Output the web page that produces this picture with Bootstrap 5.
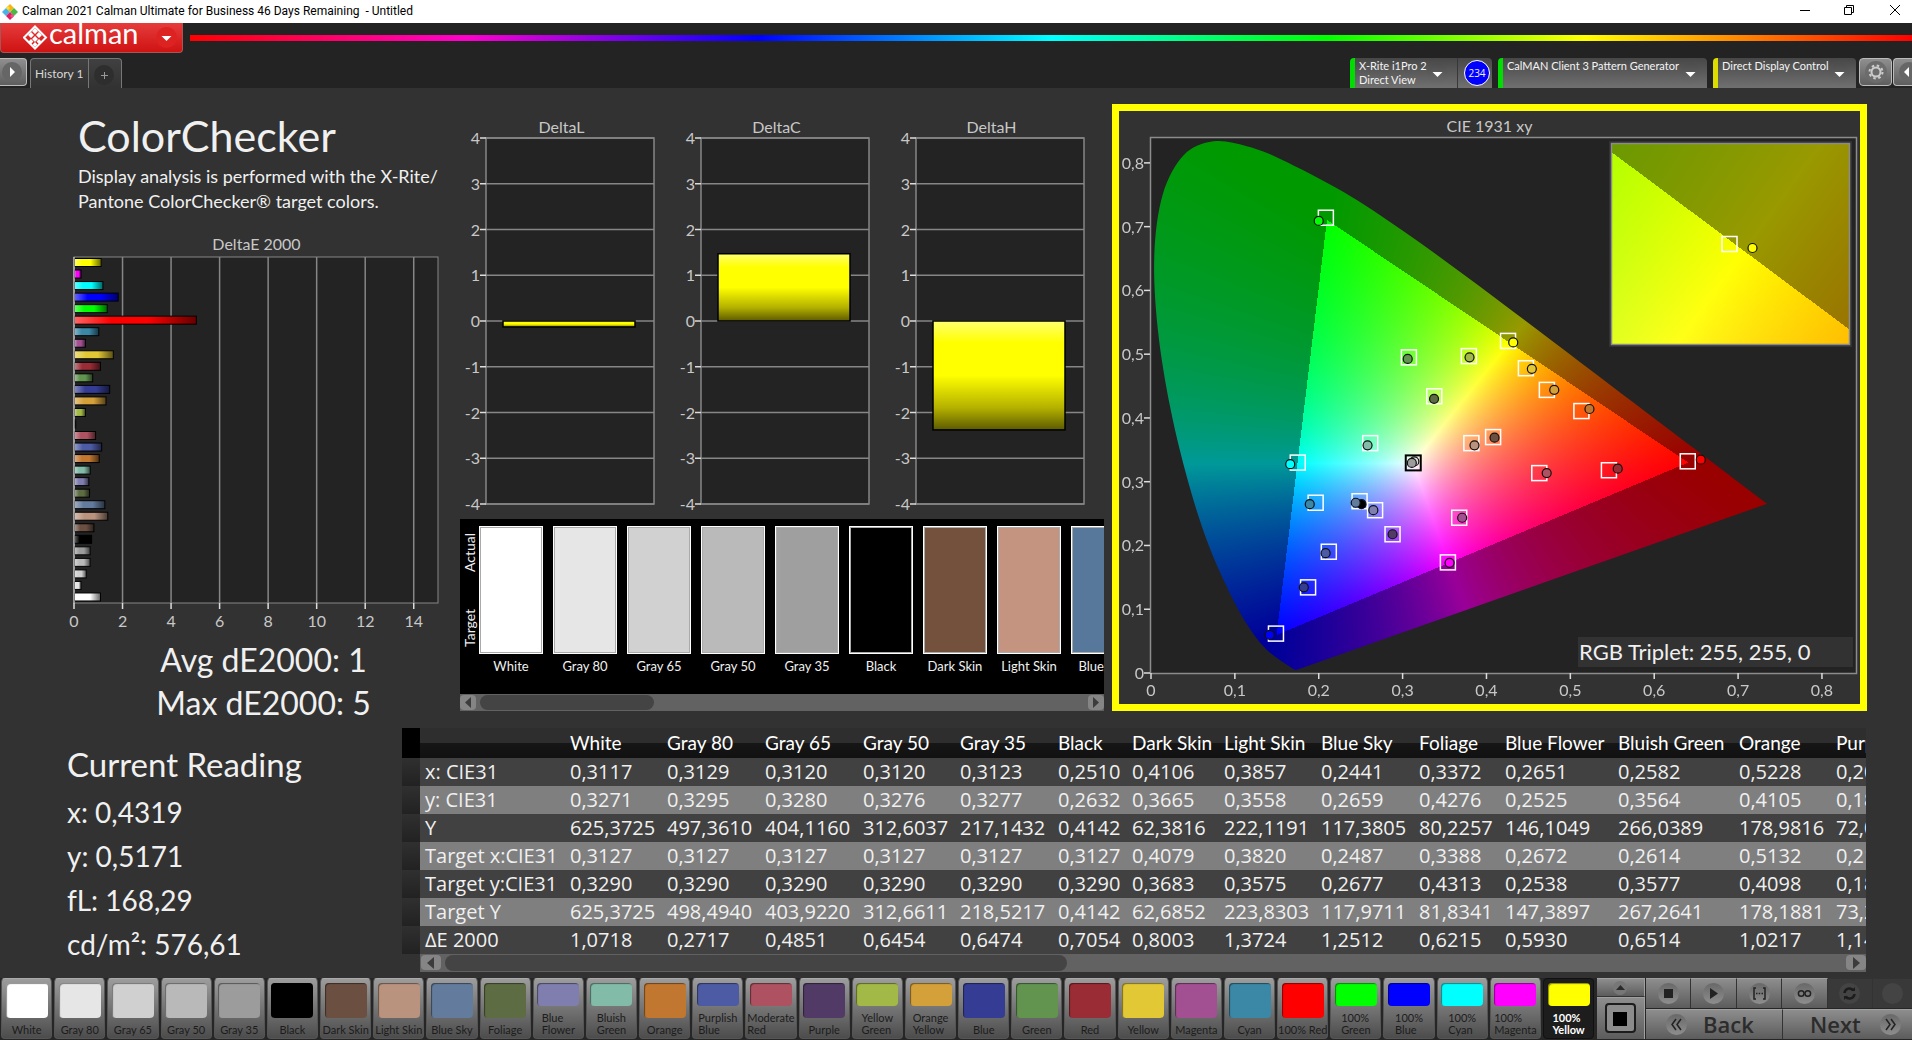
<!DOCTYPE html>
<html lang="en">
<head>
<meta charset="utf-8">
<meta name="viewport" content="width=device-width, initial-scale=1">
<title>Calman 2021 Calman Ultimate for Business</title>
<link href="https://cdn.jsdelivr.net/npm/bootstrap@5.3.0/dist/css/bootstrap.min.css" rel="stylesheet">
<style>
  :root { --panel:#323232; --dark:#232323; --txt:#f0f0f0; --soft:#c8c8c8; }
  body { font-family: Lato, "Liberation Sans", sans-serif; background: var(--panel); color: var(--txt); min-height: 100vh; overflow-x: hidden; }
  button { border: 0; padding: 0; font-family: inherit; }
  svg { display: block; }

  /* window frame */
  .titlebar { height: 23px; background: #fff; color: #000; font: 12px/23px Roboto, sans-serif; padding-left: 2px; }
  .titlebar button { width: 45px; height: 23px; background: none; overflow: hidden; }
  .titlebar button:last-child { width: 41px; }
  .apphead { background: var(--dark); }
  .brand { width: 183px; height: 30px; border: 1px solid #a55; border-top: 0; border-radius: 0 0 4px 4px; background: linear-gradient(#e63c3c, #cf1212); padding: 0 5px 0 22px; }
  .rainbow { height: 6px; margin: 12px 0 0 7px; background: linear-gradient(90deg, #f00, #f0c 16%, #00f 33%, #0ff 50%, #0f0 66%, #ff0 81%, #f00); }
  .round-ico { width: 21px; height: 21px; border-radius: 50%; background: linear-gradient(#4c4c4c, #6a6a6a); flex: none; }
  .tabrow { height: 35px; padding-top: 5px; }
  .sidebtn { height: 28px; border: 1px solid #bbb; border-radius: 4px; background: linear-gradient(#8f8f8f, #5e5e5e); }
  .tabs { height: 30px; border: 1px solid #777; border-bottom: 0; border-radius: 4px 4px 0 0; background: linear-gradient(#404040, #323232); margin-left: 3px; }
  .tabs button { background: none; color: #d8d8d8; font-size: 12px; height: 29px; }
  .tabs button + button { border-left: 1px solid #777; width: 33px; }
  .device { height: 30px; border-radius: 4px 4px 0 0; border-left: 5px solid #0d0; background: linear-gradient(#474747, #707070); color: #f4f4f4; font-size: 11px; line-height: 14px; text-align: left; padding: 1px 6px 0 4px; white-space: nowrap; }
  .device.idle { border-left-color: #dd0; }
  .device.narrow { padding-right: 9px; width: 107px; }
  .meter { width: 35px; height: 30px; border-left: 1px solid #383838; border-radius: 0 4px 0 0; background: linear-gradient(#474747, #707070); padding-left: 4px; }
  .meter span { width: 26px; height: 26px; border-radius: 50%; border: 1px solid #fff; background: #00f; font: 10px/24px "Open Sans", sans-serif; text-align: center; }
  .spaced { margin-right: 6px; }

  /* workspace */
  .topgrid { display: grid; grid-template-columns: minmax(0,460fr) minmax(0,644fr) 8px minmax(0,755fr); padding: 16px 45px 0 0; }
  .lowgrid { display: grid; grid-template-columns: minmax(0,402fr) minmax(0,1464fr); padding: 7px 46px 6px 0; }
  .intro { padding: 6px 0 0 78px; }
  .intro h1 { font-size: 43px; line-height: 52px; margin: 0 0 2px; font-weight: 400; }
  .intro p { font-size: 18px; line-height: 25px; margin: 0 0 21px; }
  .chart-title { font-size: 16px; line-height: 18px; padding-bottom: 2px; color: var(--soft); text-align: center; }
  .chart-box { min-height: 300px; }
  .chart-box svg { flex: 1 1 auto; width: 100%; min-width: 0; overflow: visible; position: relative; }
  .chart-box text { fill: var(--soft); font-size: 16px; }
  .summary { font-size: 32px; line-height: 36px; text-align: center; padding-left: 67px; }
  .summary div { margin-top: 7px; }
  .lifted { margin-bottom: 10px; }
  .deltas { gap: 30px; padding: 14px 20px 15px 9px; }

  .swatches { background: #000; height: 175px; padding: 7px 0 0 2px; overflow: hidden; }
  .sidelabels { width: 15px; height: 128px; font-size: 14px; line-height: 15px; margin-right: 2px; }
  .sidelabels span { writing-mode: vertical-rl; transform: rotate(180deg); text-align: center; flex: 1; }
  .sidelabels span:first-child { padding-bottom: 12px; }
  .sidelabels span:last-child { padding-top: 12px; }
  .pair { flex: 0 0 64px; font-size: 13px; line-height: 16px; text-align: center; white-space: nowrap; }
  .pair i { display: block; height: 128px; border: 1px solid #fff; box-shadow: inset 0 0 0 1px #aaa; margin-bottom: 4px; }
  .sbar { background: #626262; height: 17px; }
  .sbar button { width: 16px; height: 15px; border-radius: 4px; background: #858585; margin: 1px 0; }
  .sbar .thumb { background: #444; border-radius: 8px; margin: 1px 0 1px 4px; }

  .cie { border: 7px solid #ff0; padding-top: 6px; }
  .cie canvas { position: absolute; left: 0; top: 0; }
  .triplet { position: absolute; right: 7px; bottom: 37px; width: 275px; background: var(--panel); font-size: 22px; line-height: 30px; padding-left: 1px; }

  .reading { padding: 14px 0 0 67px; font-size: 28px; line-height: 44px; }
  .reading h2 { font-size: 33px; line-height: 44px; margin: 0 0 4px; font-weight: 400; }

  .grid-data { table-layout: fixed; width: 1530px; border-collapse: collapse; font: 20px/28px "Open Sans", sans-serif; white-space: nowrap; }
  .grid-data td, .grid-data th { padding: 0 0 0 5px; font-weight: 400; overflow: hidden; height: 28px; }
  .grid-data thead th { height: 30px; font-family: Lato, sans-serif; font-size: 19px; color: #fff; background: linear-gradient(#2e2e2e 50%, #161616 50%, #111); overflow: visible; }
  .grid-data tbody tr { background: #414141; }
  .grid-data tbody tr:nth-child(even) { background: #7f7f7f; }
  .grid-data thead td { background: #000; height: 30px; }
  .grid-data tbody td:first-child { background: linear-gradient(#303030, #222); }

  /* bottom strip */
  .strip { background: #262626; height: 62px; padding: 0 0 1px 1px; }
  .patch { flex: 1 1 0; min-width: 0; height: 61px; border: 1px solid #555; border-top-color: #aaa; border-radius: 4px; background: linear-gradient(#9c9c9c, #4c4c4c); color: #1c1c1c; font-size: 11px; line-height: 12px; padding: 4px 0 2px; white-space: nowrap; }
  .patch i { width: 42px; flex: 1 1 0; border-radius: 4px; box-shadow: inset 1px 1px 1px rgba(0,0,0,.45); margin-bottom: 6px; }
  .patch span { text-align: left; }
  .patch.chosen { background: #1d1d1d; border-color: #111; color: #fff; font-weight: 700; }
  .steel { background: linear-gradient(#8d8d8d, #5c5c5c); border: 1px solid #a0a0a0; border-width: 1px 1px 0 0; }
  .knob { width: 21px; height: 21px; border-radius: 50%; background: linear-gradient(#686868, #8e8e8e); }
  .play { flex: 1 1 0; height: 30px; border-right: 1px solid #333; }
  .play:last-child { flex: 0 0 39px; }
  .play.off { background: #393939; border-color: #333; }
  .play.off .knob { background: #444; }
  .nav-step { height: 30px; margin-top: 1px; font: 600 22px/29px "Open Sans", sans-serif; color: #2c2c2c; border-right: 1px solid #333; }
</style>
</head>
<body class="d-flex flex-column">

<div class="titlebar d-flex align-items-center">
  <svg width="16" height="16" viewBox="0 0 16 16" class="me-1"><path d="M8 0l4 4-4 4-4-4z" fill="#f5b512"/><path d="M4 4l4 4-4 4-4-4z" fill="#47b4e6"/><path d="M12 4l4 4-4 4-4-4z" fill="#4cb748"/><path d="M8 8l4 4-4 4-4-4z" fill="#e5195f"/><path d="M6 2l2 2-2 2-2-2z" fill="#f8dd3c"/><path d="M10 10l2 2-2 2-2-2z" fill="#f04b8a"/></svg>
  <span class="flex-grow-1">Calman 2021 Calman Ultimate for Business 46 Days Remaining&nbsp; - Untitled</span>
  <button aria-label="Minimize"><svg width="45" height="23"><path d="M19 10.500h10" stroke="#000"/></svg></button>
  <button aria-label="Restore"><svg width="45" height="23" fill="none" stroke="#000"><path d="M18.500 7.500h7v7h-7zM20.500 7.500v-2h7v7h-2"/></svg></button>
  <button aria-label="Close"><svg width="41" height="23" stroke="#000"><path d="M19 5l10 10M29 5l-10 10"/></svg></button>
</div>

<header class="apphead">
  <div class="d-flex align-items-start">
    <button class="brand d-flex align-items-center">
      <svg width="116" height="30" viewBox="0 0 116 30">
        <g fill="none" stroke="#fff" stroke-width="2"><path d="M12 3.500L23 14.500 12 25.500 1 14.500z"/></g>
        <g fill="#fff"><path d="M12 5l3 3-3 3-3-3zM8 9l3 3-3 3-3-3zM16 9l3 3-3 3-3-3zM12 13l3 3-3 3-3-3zM8 16l2.500 2.500-2.500 2.500-2.500-2.500zM16 16l2.500 2.500-2.500 2.500-2.500-2.500zM12 19l2.500 2.500-2.500 2.500-2.500-2.500z"/></g>
        <text x="26" y="21" fill="#fff" font-family="Lato" font-weight="400" font-size="29">calman</text>
      </svg>
      <span class="round-ico ms-auto" style="background:#d22"><svg width="21" height="21"><path d="M5.500 9h10l-5 5z" fill="#fff"/></svg></span>
    </button>
    <div class="rainbow flex-grow-1"></div>
  </div>
  <div class="tabrow d-flex">
    <button class="sidebtn rounded-start-0 border-start-0 pe-1" style="width:27px" aria-label="Expand"><svg width="24" height="26"><circle cx="12" cy="13" r="10" fill="#666"/><path d="M10 8v10l5-5z" fill="#fff"/></svg></button>
    <div class="tabs d-flex">
      <button class="px-1">History 1</button>
      <button aria-label="Add tab"><svg width="32" height="29"><circle cx="15" cy="16" r="10" fill="#2e2e2e"/><path d="M12 16.500h7M15.500 13v7" stroke="#999"/></svg></button>
    </div>
    <div class="ms-auto d-flex">
      <button class="device narrow d-flex rounded-end-0"><span>X-Rite i1Pro 2<br>Direct View</span><span class="round-ico ms-auto mt-1"><svg width="21" height="21"><path d="M5.500 9h10l-5 5z" fill="#fff"/></svg></span></button>
      <div class="meter spaced d-flex align-items-center justify-content-center"><span>234</span></div>
      <button class="device spaced d-flex" style="width:209px"><span>CalMAN Client 3 Pattern Generator</span><span class="round-ico ms-auto mt-1"><svg width="21" height="21"><path d="M5.500 9h10l-5 5z" fill="#fff"/></svg></span></button>
      <button class="device idle d-flex" style="width:143px"><span>Direct Display Control</span><span class="round-ico ms-auto mt-1"><svg width="21" height="21"><path d="M5.500 9h10l-5 5z" fill="#fff"/></svg></span></button>
      <button class="sidebtn" style="width:33px;margin-left:3px" aria-label="Settings"><svg width="31" height="26"><circle cx="16" cy="13" r="11" fill="#6c6c6c"/><circle cx="16" cy="13" r="4.500" fill="none" stroke="#ccc" stroke-width="2"/><circle cx="16" cy="13" r="6.500" fill="none" stroke="#ccc" stroke-width="2" stroke-dasharray="2.500 2.600"/></svg></button>
      <button class="sidebtn rounded-end-0 border-end-0" style="width:19px;margin-left:1px" aria-label="Collapse"><svg width="18" height="26"><circle cx="15" cy="13" r="10" fill="#666"/><path d="M15 8v10l-5-5z" fill="#fff"/></svg></button>
    </div>
  </div>
</header>

<main class="flex-grow-1 d-flex flex-column">
  <div class="topgrid flex-grow-1">
    <section class="d-flex flex-column">
      <div class="intro">
        <h1>ColorChecker</h1>
        <p class="text-nowrap">Display analysis is performed with the X-Rite/<br>Pantone ColorChecker® target colors.</p>
      </div>
      <div class="chart-title" style="padding-left:53px">DeltaE 2000</div>
      <div class="chart-box flex-grow-1 d-flex"><svg id="deltaE"></svg></div>
      <div class="summary"><div>Avg dE2000: 1</div><div>Max dE2000: 5</div></div>
    </section>

    <section class="d-flex flex-column lifted">
      <div class="deltas d-flex flex-grow-1">
        <div class="chart-box flex-fill d-flex flex-column"><div class="chart-title">DeltaL</div><svg class="delta" data-v="-0.13"></svg></div>
        <div class="chart-box flex-fill d-flex flex-column"><div class="chart-title">DeltaC</div><svg class="delta" data-v="1.47"></svg></div>
        <div class="chart-box flex-fill d-flex flex-column"><div class="chart-title">DeltaH</div><svg class="delta" data-v="-2.38"></svg></div>
      </div>
      <div class="swatches d-flex">
        <div class="sidelabels d-flex flex-column-reverse"><span>Target</span><span>Actual</span></div>
        <div class="d-flex" id="pairs" style="gap:10px"></div>
      </div>
      <div class="sbar d-flex">
        <button aria-label="Scroll left"><svg width="16" height="15"><path d="M11 2v11L5 7.500z" fill="#3c3c3c"/></svg></button>
        <div class="thumb" style="width:27%"></div>
        <button class="ms-auto" aria-label="Scroll right"><svg width="16" height="15"><path d="M5 2v11l6-5.500z" fill="#3c3c3c"/></svg></button>
      </div>
    </section>

    <div></div>

    <section class="cie lifted d-flex flex-column position-relative">
      <div class="chart-title">CIE 1931 xy</div>
      <div class="chart-box flex-grow-1 d-flex position-relative"><canvas id="gamut"></canvas><svg id="cie"></svg></div>
      <div class="triplet">RGB Triplet: 255, 255, 0</div>
    </section>
  </div>

  <div class="lowgrid">
    <section class="reading">
      <h2>Current Reading</h2>
      <div>x: 0,4319</div><div>y: 0,5171</div><div>fL: 168,29</div><div>cd/m²: 576,61</div>
    </section>
    <section>
      <div class="overflow-hidden"><table class="grid-data" id="grid"></table></div>
      <div class="sbar d-flex" style="margin-left:18px;height:18px">
        <button style="width:20px;margin-left:1px" aria-label="Scroll left"><svg width="20" height="16"><path d="M13 2v12L6 8z" fill="#3c3c3c"/></svg></button>
        <div class="thumb" style="width:43%"></div>
        <button class="ms-auto" style="width:20px" aria-label="Scroll right"><svg width="20" height="16"><path d="M7 2v12l7-6z" fill="#3c3c3c"/></svg></button>
      </div>
    </section>
  </div>
</main>

<footer class="strip d-flex">
  <div class="d-flex flex-grow-1" id="patches" style="gap:2px"></div>
  <div class="d-flex flex-column" style="width:48px;margin-left:3px">
    <button class="steel" style="height:19px;border-bottom:1px solid #333" aria-label="Up"><svg width="47" height="17"><circle cx="23" cy="9" r="7" fill="#777"/><path d="M19 11h9l-4.500-5z" fill="#2a2a2a"/></svg></button>
    <button class="steel flex-grow-1" aria-label="Pattern window"><svg width="47" height="41"><rect x="9" y="6" width="29" height="28" rx="3" fill="#8c8c8c" stroke="#1c1c1c" stroke-width="2"/><rect x="16" y="14" width="14" height="14" fill="#000"/></svg></button>
  </div>
  <div style="width:266px;margin-left:1px">
    <div class="d-flex">
      <button class="steel play d-flex align-items-center justify-content-center" aria-label="Stop"><span class="knob"><svg width="21" height="21"><rect x="6" y="6" width="9" height="9" fill="#222"/></svg></span></button>
      <button class="steel play d-flex align-items-center justify-content-center" aria-label="Play"><span class="knob"><svg width="21" height="21"><path d="M7 5v11l8-5.500z" fill="#222"/></svg></span></button>
      <button class="steel play d-flex align-items-center justify-content-center" aria-label="Range"><span class="knob"><svg width="21" height="21" fill="none" stroke="#222" stroke-width="1.500"><path d="M7 5H5v11h2M14 5h2v11h-2M7 10.500h1.500M9.700 10.500h1.500M12.500 10.500H14"/></svg></span></button>
      <button class="steel play d-flex align-items-center justify-content-center" aria-label="Loop"><span class="knob"><svg width="21" height="21" fill="none" stroke="#222" stroke-width="1.500"><circle cx="7.200" cy="10.500" r="2.800"/><circle cx="13.800" cy="10.500" r="2.800"/></svg></span></button>
      <button class="steel play off d-flex align-items-center justify-content-center" aria-label="Refresh"><span class="knob"><svg width="21" height="21" fill="none" stroke="#1c1c1c" stroke-width="2.500"><path d="M5.500 10a5 5 0 0 1 9-2.500M15.500 11a5 5 0 0 1-9 2.500"/><path d="M12 8h4V4zM9 13H5v4z" fill="#1c1c1c" stroke="none"/></svg></span></button>
      <button class="steel play off d-flex align-items-center justify-content-center border-end-0" aria-label="Record"><span class="knob"></span></button>
    </div>
    <div class="d-flex">
      <button class="steel nav-step d-flex align-items-center" style="width:137px;padding-left:20px"><span class="knob"><svg width="21" height="21" fill="none" stroke="#222" stroke-width="1.500"><path d="M10 5l-4 5.500 4 5.500M15 5l-4 5.500 4 5.500"/></svg></span><span style="margin-left:16px">Back</span></button>
      <button class="steel nav-step d-flex align-items-center flex-grow-1 border-end-0" style="padding-left:27px"><span>Next</span><span class="knob ms-auto" style="margin-right:11px"><svg width="21" height="21" fill="none" stroke="#222" stroke-width="1.500"><path d="M6 5l4 5.500L6 16M11 5l4 5.500-4 5.500"/></svg></span></button>
    </div>
  </div>
</footer>

<script src="https://cdn.jsdelivr.net/npm/bootstrap@5.3.0/dist/js/bootstrap.bundle.min.js"></script>
<script>
/* name, colour, deltaE, target marker xy, measured marker xy */
const patches = [
  ['White','#ffffff',1.07],['Gray 80','#e6e6e6',.27],['Gray 65','#d0d0d0',.485],['Gray 50','#b9b9b9',.645],['Gray 35','#9c9c9c',.647],['Black','#000000',.705],
  ['Dark Skin','#6b5042',.8,.4079,.3700,.4096,.3690],['Light Skin','#b9937e',1.37,.3820,.3605,.3857,.3570],['Blue Sky','#637b9c',1.25,.2487,.2694,.2441,.2670],
  ['Foliage','#5d6c43',.62,.3378,.4340,.3375,.4300],['Blue Flower','#807eae',.59,.2672,.2553,.2651,.2553],['Bluish Green','#82bca8',.65,.2614,.3605,.2582,.3570],
  ['Orange','#c27730',1.02,.5132,.4108,.5228,.4140],['Purplish Blue','#4d5ba5',1.12,.2120,.1902,.2082,.1879],['Moderate Red','#ae5160',.87,.4630,.3135,.4718,.3135],
  ['Purple','#523a66',.05,.2880,.2176,.2880,.2176],['Yellow Green','#a3b947',.45,.3790,.4970,.3798,.4950],['Orange Yellow','#d4a03a',1.3,.4720,.4440,.4808,.4440],
  ['Blue','#343d93',1.45,.1873,.1343,.1822,.1343],['Green','#629450',.75,.3075,.4950,.3061,.4925],['Red','#9a2c35',1.07,.5460,.3180,.5565,.3205],
  ['Yellow','#e2c835',1.6,.4470,.4780,.4541,.4770],['Magenta','#a35093',.45,.3675,.2435,.3710,.2435],['Cyan','#3a87a6',1,.1963,.2670,.1893,.2647],
  ['100% Red','#ff0000',5.02,.6400,.3320,.6555,.3345],['100% Green','#00ff00',1.35,.2085,.7140,.2000,.7090],['100% Blue','#0000ff',1.8,.1490,.0618,.1415,.0597],
  ['100% Cyan','#00ffff',1.17,.1750,.3300,.1660,.3275],['100% Magenta','#ff00ff',.27,.3540,.1735,.3560,.1728],['100% Yellow','#ffff00',1.1,.4257,.5208,.4319,.5185]
];
const strips = [['White','#ffffff'],['Gray 80','#e6e6e6'],['Gray 65','#d1d1d1'],['Gray 50','#bababa'],['Gray 35','#9f9f9f'],['Black','#000000'],['Dark Skin','#73513d'],['Light Skin','#c49480'],['Blue Sky','#57789a']];
document.getElementById('pairs').innerHTML = strips.map(s => `<div class="pair"><i style="background:${s[1]}"></i>${s[0]}</div>`).join('');

const twoLines = /^(Blue Flower|Bluish Green|Purplish Blue|Moderate Red|Yellow Green|Orange Yellow|100% (Green|Blue|Cyan|Magenta|Yellow))$/;
document.getElementById('patches').innerHTML = patches.map(p =>
  `<button class="patch d-flex flex-column align-items-center${p[0]==='100% Yellow'?' chosen':''}"><i style="background:${p[1]}"></i><span>${twoLines.test(p[0]) ? p[0].replace(' ','<br>') : p[0]}</span></button>`).join('');

const cols = [18,145,97,98,98,97,98,74,92,97,98,86,113,121,97,101];
const head = ['White','Gray 80','Gray 65','Gray 50','Gray 35','Black','Dark Skin','Light Skin','Blue Sky','Foliage','Blue Flower','Bluish Green','Orange','Purplish Blue'];
const rows = {
  'x: CIE31':'0,3117 0,3129 0,3120 0,3120 0,3123 0,2510 0,4106 0,3857 0,2441 0,3372 0,2651 0,2582 0,5228 0,2082',
  'y: CIE31':'0,3271 0,3295 0,3280 0,3276 0,3277 0,2632 0,3665 0,3558 0,2659 0,4276 0,2525 0,3564 0,4105 0,1879',
  'Y':'625,3725 497,3610 404,1160 312,6037 217,1432 0,4142 62,3816 222,1191 117,3805 80,2257 146,1049 266,0389 178,9816 72,0411',
  'Target x:CIE31':'0,3127 0,3127 0,3127 0,3127 0,3127 0,3127 0,4079 0,3820 0,2487 0,3388 0,2672 0,2614 0,5132 0,2120',
  'Target y:CIE31':'0,3290 0,3290 0,3290 0,3290 0,3290 0,3290 0,3683 0,3575 0,2677 0,4313 0,2538 0,3577 0,4098 0,1880',
  'Target Y':'625,3725 498,4940 403,9220 312,6611 218,5217 0,4142 62,6852 223,8303 117,9711 81,8341 147,3897 267,2641 178,1881 73,2520',
  'ΔE 2000':'1,0718 0,2717 0,4851 0,6454 0,6474 0,7054 0,8003 1,3724 1,2512 0,6215 0,5930 0,6514 1,0217 1,1432'
};
document.getElementById('grid').innerHTML = '<colgroup>' + cols.map(c => `<col style="width:${c}px">`).join('') + '</colgroup><thead><tr><td></td><th></th>' +
  head.map(h => `<th scope="col">${h}</th>`).join('') + '</tr></thead><tbody>' +
  Object.entries(rows).map(([k,v]) => `<tr><td></td><th scope="row">${k}</th>${v.split(' ').map(c => `<td>${c}</td>`).join('')}</tr>`).join('') + '</tbody>';

const line = (a,b,c,d,col='#868686',w=1) => `<path d="M${a} ${b}L${c} ${d}" stroke="${col}" stroke-width="${w}"/>`;
const label = (x,y,t,anchor='middle') => `<text x="${x}" y="${y}" text-anchor="${anchor}">${t}</text>`;
const size = el => { const r = el.getBoundingClientRect(); return [r.width, r.height]; };

function drawDeltaE() {
  const el = document.getElementById('deltaE'), [W,H] = size(el);
  const L = 74, R = W-22, T = 2, B = H-32, u = (R-L)/15;
  let defs = '', s = `<rect x="${L}" y="${T}" width="${R-L}" height="${B-T}" fill="#232323" stroke="#868686"/>`;
  for (let v=0; v<=14; v+=2) {
    const x = L+v*u;
    s += line(x,T,x,B,'#868686',1.5) + line(x,B,x,B+6,'#ddd',1.5) + label(x,B+24,v);
  }
  const band = (B-T)/patches.length;
  [...patches].reverse().forEach((p,i) => {
    defs += `<linearGradient id="e${i}"><stop offset="0" stop-color="#fff" stop-opacity=".4"/><stop offset=".3" stop-color="#fff" stop-opacity="0"/><stop offset=".6" stop-opacity="0"/><stop offset="1" stop-opacity=".6"/></linearGradient>`;
    const a = `x="${L+.5}" y="${T+1.5+i*band}" width="${p[2]*u}" height="8"`;
    s += `<rect ${a} fill="${p[1]}"/><rect ${a} fill="url(#e${i})" stroke="#000"/>`;
  });
  el.innerHTML = `<defs>${defs}</defs>${s}${line(L,T,L,B,'#aaa',1.5)}`;
}

function drawDelta(el) {
  const [W,H] = size(el), L = 17, u = H/8, z = H/2, v = +el.dataset.v;
  let s = `<defs><linearGradient id="g${v}" x2="0" y2="1"><stop offset="0" stop-color="#ffff70"/><stop offset=".2" stop-color="#ff0"/><stop offset=".5" stop-color="#ff0"/><stop offset=".8" stop-color="#b4b000"/><stop offset="1" stop-color="#5c5a00"/></linearGradient></defs>` +
    `<rect x="${L}" y="0" width="${W-L}" height="${H}" fill="#232323" stroke="#868686" stroke-width="1.500"/>`;
  for (let k=-4; k<=4; k++) {
    const y = z-k*u;
    s += line(L,y,W,y,'#868686',1.5) + line(L-6,y,L,y,'#ddd',1.5) + label(L-6,y+6,k,'end');
  }
  s += `<rect x="${L+17}" y="${v>0?z-v*u:z}" width="${W-L-36}" height="${Math.abs(v)*u}" fill="url(#g${v})" stroke="#000" stroke-width="1.500"/>`;
  el.innerHTML = s;
}

/* spectral locus, CIE 1931 2 degree observer */
const locus = [[.1741,.005],[.1714,.0051],[.1689,.0069],[.1644,.0109],[.1566,.0177],[.144,.0297],[.1355,.0399],[.1241,.0578],[.1096,.0868],[.0913,.1327],[.0687,.2007],[.0454,.295],[.0235,.4127],[.0082,.5384],[.0039,.6548],[.0139,.7502],[.0389,.812],[.0743,.8338],[.1142,.8262],[.1547,.8059],[.2296,.7543],[.3016,.6923],[.3731,.6245],[.4441,.5547],[.5125,.4866],[.5752,.4242],[.627,.3725],[.6658,.334],[.6915,.3083],[.719,.2809],[.7347,.2653]];

function tint(x, y) {
  const z = 1-x-y;
  let r = 2.0414*x-.5649*y-.3447*z, g = -.9693*x+1.876*y+.0416*z, b = .0134*x-.1184*y+1.0154*z;
  const k = (r<-.0005||g<-.0005||b<-.0005) ? .6 : 1;
  r = Math.max(r,0); g = Math.max(g,0); b = Math.max(b,0);
  const m = 255*k/Math.max(r,g,b,1e-6);
  return [r*m, g*m, b*m];
}
function fillTint(w, h, x0, y0, x1, y1) {
  const c = document.createElement('canvas'); c.width = w; c.height = h;
  const ctx = c.getContext('2d'), im = ctx.createImageData(w,h);
  for (let j=0,p=0; j<h; j++) for (let i=0; i<w; i++) {
    const t = tint(x0+(x1-x0)*(i+.5)/w, y0+(y1-y0)*(j+.5)/h);
    im.data[p++]=t[0]; im.data[p++]=t[1]; im.data[p++]=t[2]; im.data[p++]=255;
  }
  ctx.putImageData(im,0,0);
  return c;
}
function drawCIE() {
  const el = document.getElementById('cie'), cv = document.getElementById('gamut'), [W,H] = size(el).map(Math.round);
  const L = 32, R = W-4, T = 0, B = H-31, M = .8406;
  const X = x => L+(R-L)*x/M, Y = y => B-(B-T)*y/M;
  cv.width = W; cv.height = H;
  const c = cv.getContext('2d');
  c.fillStyle = '#232323'; c.fillRect(L,T,R-L,B-T);
  c.save(); c.beginPath(); c.moveTo(X(locus[0][0]),Y(locus[0][1]));
  for (let i=0; i<locus.length-1; i++) {
    const p0 = locus[Math.max(i-1,0)], p1 = locus[i], p2 = locus[i+1], p3 = locus[Math.min(i+2,locus.length-1)];
    c.bezierCurveTo(X(p1[0]+(p2[0]-p0[0])/6),Y(p1[1]+(p2[1]-p0[1])/6),X(p2[0]-(p3[0]-p1[0])/6),Y(p2[1]-(p3[1]-p1[1])/6),X(p2[0]),Y(p2[1]));
  }
  c.closePath(); c.clip();
  c.drawImage(fillTint(R-L,B-T,0,M,M,0),L,T);
  c.restore();
  /* magnified view round the current patch */
  const iw = 237, ih = 200, ix = R-7-iw, iy = 7, span = .066, cx = .4235, cy = .5207;
  c.fillStyle = '#323232'; c.fillRect(ix-3,iy-3,iw+6,ih+6);
  c.drawImage(fillTint(iw,ih,cx-span/2,cy+span/2,cx+span/2,cy-span/2),ix,iy);

  let s = `<rect x="${L-.5}" y="${T+.5}" width="${R-L+1}" height="${B-T}" fill="none" stroke="#8c8c8c" stroke-width="1.500"/>`;
  for (let k=0; k<=8; k++) {
    const t = k ? '0,'+k : '0', x = X(k/10), y = Y(k/10);
    s += line(x,B,x,B+6,'#ddd',1.5) + label(x,B+23,t) + line(L-7,y,L-1,y,'#ddd',1.5) + label(L-7,y+6,t,'end');
  }
  const sq = (x,y,col='#fff',w=1.5) => `<rect x="${x-7.5}" y="${y-7.5}" width="15" height="15" fill="none" stroke="${col}" stroke-width="${w}"/>`;
  const dot = (x,y,col) => `<circle cx="${x}" cy="${y}" r="4.500" fill="${col}" stroke="#111" stroke-width="1.200"/>`;
  patches.forEach(p => { if (p[3]) s += sq(X(p[3]),Y(p[4])); });
  s += dot(X(.251),Y(.2647),'#000');
  patches.forEach(p => { if (p[3]) s += dot(X(p[5]),Y(p[6]),p[1]); });
  s += sq(X(.3127),Y(.3295),'#000',2) + dot(X(.3140),Y(.3318),'#ddd') + dot(X(.3110),Y(.3295),'#9c9c9c');
  s += `<rect x="${ix-.5}" y="${iy-.5}" width="${iw+1}" height="${ih+1}" fill="none" stroke="#8c8c8c" stroke-width="1.500"/>`;
  s += sq(ix+iw/2-1,iy+ih/2) + dot(ix+iw/2+22,iy+ih/2+4,'#ff0');
  el.innerHTML = s;
}
function drawAll() { drawDeltaE(); document.querySelectorAll('.delta').forEach(drawDelta); drawCIE(); }
drawAll();
addEventListener('resize', drawAll);
</script>
</body>
</html>
